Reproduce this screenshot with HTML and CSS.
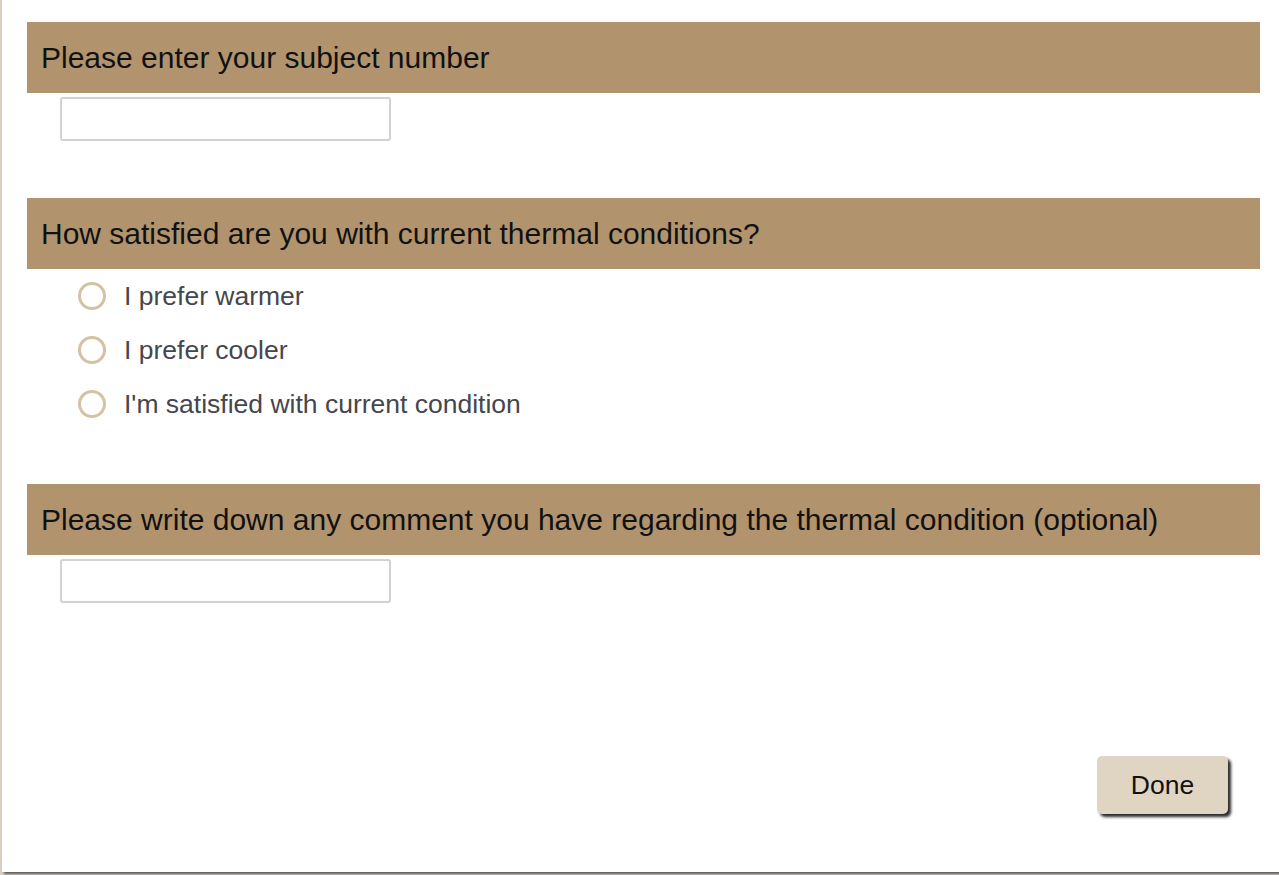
FILE: index.html
```html
<!DOCTYPE html>
<html>
<head>
<meta charset="utf-8">
<link rel="stylesheet" href="styles.css">
</head>
<body>
<div class="page">
  <section class="question q-subject">
    <div class="q-header">Please enter your subject number</div>
    <div class="q-body"><input class="text-input" type="text"></div>
  </section>
  <section class="question q-satisfaction">
    <div class="q-header">How satisfied are you with current thermal conditions?</div>
    <div class="radio-list">
      <label class="radio-row"><span class="radio"></span><span class="radio-label">I prefer warmer</span></label>
      <label class="radio-row"><span class="radio"></span><span class="radio-label">I prefer cooler</span></label>
      <label class="radio-row"><span class="radio"></span><span class="radio-label">I'm satisfied with current condition</span></label>
    </div>
  </section>
  <section class="question q-comment">
    <div class="q-header">Please write down any comment you have regarding the thermal condition (optional)</div>
    <div class="q-body"><input class="text-input" type="text"></div>
  </section>
  <div class="footer">
    <button class="done-btn">Done</button>
  </div>
</div>
</body>
</html>
```
FILE: styles.css
```css
html, body {
  margin: 0;
  padding: 0;
  height: 100%;
  overflow: hidden;
}
body {
  background: #d9cebf;
  font-family: "Liberation Sans", Arial, sans-serif;
}
.page {
  margin-left: 2px;
  height: 872px;
  background: #ffffff;
  box-shadow: 2px 2px 2px #5f5d5a;
  padding: 22px 19px 0 25px;
  box-sizing: border-box;
  display: flex;
  flex-direction: column;
}
.q-header {
  background: #b1946d;
  height: 71px;
  display: flex;
  align-items: center;
  padding-left: 14px;
  font-size: 30px;
  color: #111111;
}
.q-body {
  padding: 4px 0 0 33px;
}
.text-input {
  display: block;
  width: 331px;
  height: 44px;
  box-sizing: border-box;
  border: 2px solid #d2d2d6;
  border-radius: 3px;
  background: #fff;
  margin: 0;
  outline: none;
}
.q-subject {
  margin-bottom: 57px;
}
.radio-list {
  display: flex;
  flex-direction: column;
  padding-left: 51px;
}
.radio-row {
  height: 54px;
  display: flex;
  align-items: center;
  gap: 18px;
}
.radio {
  width: 28px;
  height: 28px;
  box-sizing: border-box;
  border: 3px solid #d4c2a4;
  border-radius: 50%;
  flex: none;
}
.radio-label {
  font-size: 26.5px;
  color: #45464e;
}
.q-satisfaction {
  margin-bottom: 53px;
}
.footer {
  display: flex;
  justify-content: flex-end;
  padding-top: 153px;
  padding-right: 32px;
}
.done-btn {
  width: 131px;
  height: 58px;
  background: #e0d4c3;
  border: none;
  border-radius: 5px;
  box-shadow: 3px 3px 3px #2a2a2a;
  font-family: "Liberation Sans", Arial, sans-serif;
  font-size: 26.5px;
  color: #111111;
  padding: 0;
}
```
